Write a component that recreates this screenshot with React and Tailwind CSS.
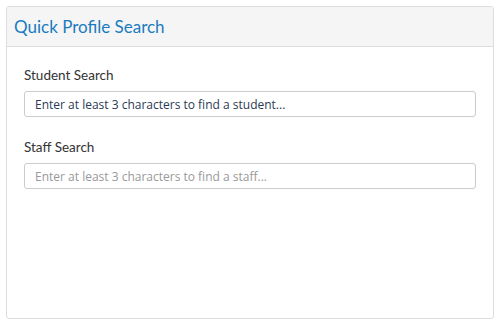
import React from "react";

const sans = { fontFamily: 'Lato, "Open Sans", "Liberation Sans", sans-serif' };
const inputFont = { fontFamily: '"Open Sans", "Liberation Sans", sans-serif' };

function SearchField({ label, placeholder, dark }) {
  return (
    <div>
      <label className="block text-[13.5px] leading-[20px] text-[#333]">{label}</label>
      <input
        type="text"
        placeholder={placeholder}
        style={inputFont}
        className={`mt-[6px] block h-[26px] w-full rounded-[3px] border border-[#ccc] bg-white px-[10px] text-[12px] outline-none ${
          dark ? "placeholder:text-[#2b3a55]" : "placeholder:text-[#999]"
        }`}
      />
    </div>
  );
}

export default function App() {
  return (
    <div className="h-[326px] w-[504px] bg-white p-[6px]" style={sans}>
      <div className="flex h-[313px] w-[488px] flex-col overflow-hidden rounded-[3px] border border-[#ddd] bg-white">
        <div className="flex h-[40px] items-center border-b border-[#ddd] bg-[#f5f5f5] px-[7px]">
          <h2 className="text-[17px] font-normal text-[#1a7bc0]">Quick Profile Search</h2>
        </div>
        <div className="flex flex-col gap-[20px] px-[17px] pt-[18px]">
          <SearchField
            label="Student Search"
            placeholder="Enter at least 3 characters to find a student..."
            dark
          />
          <SearchField label="Staff Search" placeholder="Enter at least 3 characters to find a staff..." />
        </div>
      </div>
    </div>
  );
}
